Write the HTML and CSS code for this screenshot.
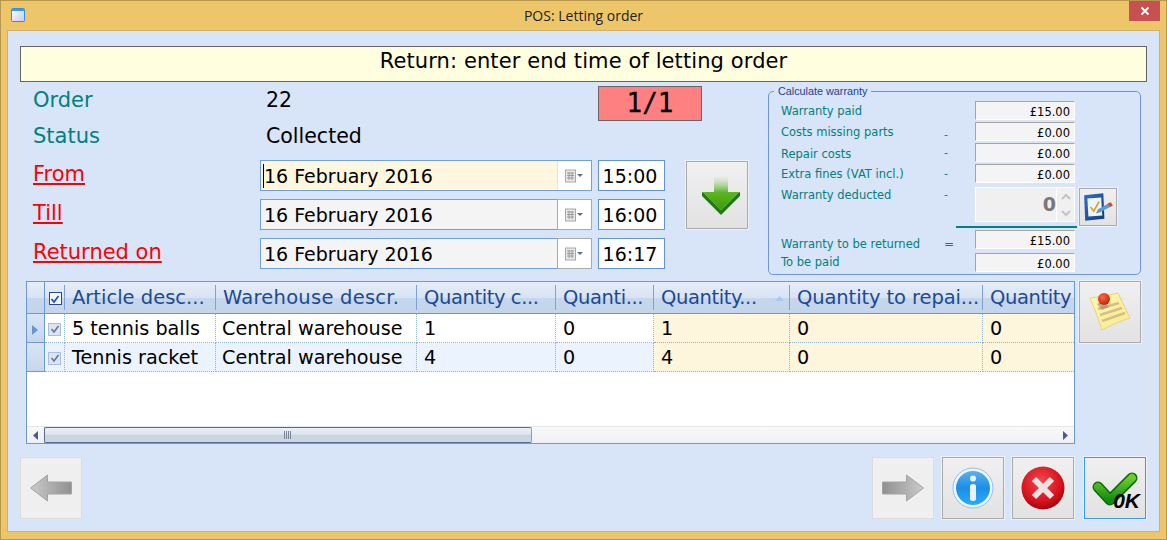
FILE: index.html
```html
<!DOCTYPE html>
<html lang="en">
<head>
<meta charset="utf-8">
<title>POS: Letting order</title>
<link rel="stylesheet" href="styles.css">
</head>
<body>
<div class="window">
  <header class="titlebar">
    <svg class="appicon" width="15" height="15" viewBox="0 0 15 15"><defs><linearGradient id="ai" x1="0" y1="0" x2="1" y2="1"><stop offset="0" stop-color="#fff"/><stop offset="1" stop-color="#c6c8f4"/></linearGradient></defs><rect x=".5" y=".5" width="13" height="13" rx="1" fill="url(#ai)" stroke="#2f8fe8"/><rect x="1" y="1" width="12" height="2" fill="#3a9af0"/></svg>
    <span class="title">POS: Letting order</span>
    <button class="close"><svg width="10" height="10" viewBox="0 0 10 10"><path d="M1.500 1.500l7 7M8.500 1.500l-7 7" stroke="#fff" stroke-width="1.800"/></svg></button>
  </header>
  <main class="content">
    <div class="banner">Return: enter end time of letting order</div>
    <section class="panel">
      <div class="top">
        <div class="form">
          <span class="lbl-teal">Order</span><span class="val">22</span>
          <div class="badge">1/1</div>
          <span class="lbl-teal">Status</span><span class="val">Collected</span>

          <a class="lbl-red">From</a>
          <div class="date"><span class="date-text focus"><i class="caret"></i>16 February 2016</span><span class="cal"><svg width="22" height="14" viewBox="0 0 22 14"><use href="#calicon"/></svg></span></div>
          <div class="time">15:00</div>
          <button class="btn arrow-btn">
            <svg width="38" height="40" viewBox="0 0 38 40"><defs><linearGradient id="st" x1="0" y1="0" x2="0" y2="1"><stop offset="0" stop-color="#a9d98f" stop-opacity=".1"/><stop offset="1" stop-color="#46a80e"/></linearGradient><linearGradient id="hd" x1="0" y1="0" x2="0" y2="1"><stop offset="0" stop-color="#5cb81c"/><stop offset="1" stop-color="#3c9a0c"/></linearGradient></defs><rect x="12" y="0" width="14" height="17" fill="url(#st)"/><path d="M0 15.500L1 15 19 33 37 15 38 15.500V19L19 38 0 19Z" fill="#1f7a12"/><path d="M1 15h11v1h14v-1h11L19 33Z" fill="url(#hd)"/></svg>
          </button>

          <a class="lbl-red">Till</a>
          <div class="date alt"><span class="date-text">16 February 2016</span><span class="cal"><svg width="22" height="14" viewBox="0 0 22 14"><use href="#calicon"/></svg></span></div>
          <div class="time">16:00</div>

          <a class="lbl-red">Returned on</a>
          <div class="date alt"><span class="date-text">16 February 2016</span><span class="cal"><svg width="22" height="14" viewBox="0 0 22 14"><use href="#calicon"/></svg></span></div>
          <div class="time">16:17</div>
        </div>

        <fieldset class="warranty">
          <legend>Calculate warranty</legend>
          <div class="wgrid">
            <span class="wl">Warranty paid</span><span class="op"></span><span class="wf">£15.00</span><span></span>
            <span class="wl">Costs missing parts</span><span class="op low">-</span><span class="wf">£0.00</span><span></span>
            <span class="wl dn2">Repair costs</span><span class="op">-</span><span class="wf">£0.00</span><span></span>
            <span class="wl">Extra fines (VAT incl.)</span><span class="op">-</span><span class="wf">£0.00</span><span></span>
            <span class="wl">Warranty deducted</span><span class="op">-</span>
            <div class="spin"><span class="spin-val">0</span><span class="spin-btns"><svg width="10" height="33" viewBox="0 0 10 33"><path d="M1 11l4-4 4 4M1 23l4 4 4-4" fill="none" stroke="#c4c4c4" stroke-width="2"/></svg></span></div>
            <button class="btn edit-btn"><svg width="32" height="32" viewBox="0 0 30 30"><defs><linearGradient id="tb" x1="0" y1="0" x2="1" y2="1"><stop offset="0" stop-color="#2f6fc8"/><stop offset="1" stop-color="#12397f"/></linearGradient></defs><path d="M2 4l18-2 1 24-18 2Z" fill="url(#tb)"/><path d="M5 7l13-1 1 17-13 1Z" fill="#eef4fb"/><path d="M8 15l3 4 5-9" fill="none" stroke="#e0a020" stroke-width="1.600"/><path d="M13 21l2-4 11-6 2 3-11 6Z" fill="#5a9ad8"/><path d="M24 12l3-1.500 2 3-3 1.500Z" fill="#d04a30"/></svg></button>
            <span class="rule"></span>
            <span class="wl dn4">Warranty to be returned</span><span class="op eq">=</span><span class="wf">£15.00</span><span></span>
            <span class="wl dn2">To be paid</span><span class="op"></span><span class="wf last">£0.00</span><span></span>
          </div>
        </fieldset>
      </div>

      <div class="gridrow">
        <div class="gridbox">
          <div class="viewport">
            <table class="grid">
              <colgroup><col class="c1"><col class="c2"><col class="c3"><col class="c4"><col class="c5"><col class="c6"><col class="c7"><col class="c8"><col class="c9"></colgroup>
              <thead>
                <tr>
                  <th class="ind"></th>
                  <th class="chk"><span class="cb head"><svg width="10" height="10" viewBox="0 0 10 10"><path d="M1.500 5l2.500 3 4.500-6" fill="none" stroke="#1f57b4" stroke-width="1.800"/></svg></span></th>
                  <th>Article desc...</th><th class="wh">Warehouse descr.</th><th class="q">Quantity c...</th><th class="q">Quanti...</th>
                  <th class="q">Quantity...<svg class="sort" width="9" height="5" viewBox="0 0 9 5"><path d="M4.500 0L9 5H0Z" fill="#a8c8f0"/></svg></th>
                  <th class="q2">Quantity to repai...</th><th class="q end">Quantity</th>
                </tr>
              </thead>
              <tbody>
                <tr>
                  <td class="ind"><svg width="6" height="10" viewBox="0 0 6 10"><path d="M0 0l6 5-6 5Z" fill="#6a94d0"/></svg></td>
                  <td class="chk"><span class="cb"><svg width="10" height="10" viewBox="0 0 10 10"><path d="M1.500 5l2.500 3 4.500-6" fill="none" stroke="#5c78a8" stroke-width="1.600"/></svg></span></td>
                  <td>5 tennis balls</td><td class="wc">Central warehouse</td><td class="n">1</td><td>0</td><td class="hi">1</td><td class="hi">0</td><td class="hi">0</td>
                </tr>
                <tr class="odd">
                  <td class="ind"></td>
                  <td class="chk"><span class="cb"><svg width="10" height="10" viewBox="0 0 10 10"><path d="M1.500 5l2.500 3 4.500-6" fill="none" stroke="#5c78a8" stroke-width="1.600"/></svg></span></td>
                  <td>Tennis racket</td><td class="wc">Central warehouse</td><td class="n">4</td><td>0</td><td class="hi">4</td><td class="hi">0</td><td class="hi">0</td>
                </tr>
              </tbody>
            </table>
          </div>
          <div class="hscroll">
            <span class="sb-arrow"><svg width="5" height="9" viewBox="0 0 5 9"><path d="M5 0L0 4.500 5 9Z" fill="#4a5c8c"/></svg></span>
            <div class="thumb"><i class="grip"></i></div>
            <span class="sb-space"></span>
            <span class="sb-arrow right"><svg width="5" height="9" viewBox="0 0 5 9"><path d="M0 0L5 4.500 0 9Z" fill="#4a5c8c"/></svg></span>
          </div>
        </div>
        <button class="btn big">
          <svg width="44" height="40" viewBox="0 0 44 40"><defs><linearGradient id="pp" x1="0" y1="0" x2="1" y2="1"><stop offset="0" stop-color="#fff8b0"/><stop offset="1" stop-color="#f8e890"/></linearGradient><radialGradient id="pin" cx=".4" cy=".35" r=".7"><stop offset="0" stop-color="#ff6a3a"/><stop offset="1" stop-color="#c81c0c"/></radialGradient></defs><path d="M2 6Q16 5 30 1 36 14 42 26 28 30 14 38 9 22 2 6Z" fill="url(#pp)" stroke="#e8d478"/><path d="M10 17l21-6M12 23l22-7M14 29l23-8" stroke="#d4c084" stroke-width="2.500" fill="none"/><path d="M9 12l6-4 6 7-7 3Z" fill="#8a8a70" opacity=".6"/><circle cx="16" cy="7" r="6" fill="url(#pin)"/></svg>
        </button>
      </div>
    </section>

    <footer class="actions">
      <button class="btn big off">
        <svg width="42" height="28" viewBox="0 0 42 28"><use href="#grayarrow" transform="translate(42 0) scale(-1 1)"/></svg>
      </button>
      <span class="spacer"></span>
      <button class="btn big off">
        <svg width="42" height="28" viewBox="0 0 42 28"><use href="#grayarrow"/></svg>
      </button>
      <button class="btn big">
        <svg width="42" height="42" viewBox="0 0 42 42"><defs><linearGradient id="inf" x1="0" y1="0" x2="0" y2="1"><stop offset="0" stop-color="#5ab0ee"/><stop offset=".5" stop-color="#1c8ee8"/><stop offset="1" stop-color="#28acff"/></linearGradient></defs><circle cx="21" cy="21" r="20" fill="#f0f6fe" stroke="#8cc0f0"/><circle cx="21" cy="21" r="17" fill="url(#inf)"/><circle cx="21" cy="11.500" r="3" fill="#e8f2fc"/><rect x="18" y="17" width="6" height="17" rx="2.500" fill="#e8f2fc"/></svg>
      </button>
      <button class="btn big">
        <svg width="44" height="44" viewBox="0 0 44 44"><defs><radialGradient id="rd" cx=".45" cy=".35" r=".7"><stop offset="0" stop-color="#f24a50"/><stop offset=".7" stop-color="#d40f1a"/><stop offset="1" stop-color="#8a0810"/></radialGradient></defs><circle cx="22" cy="22" r="21.500" fill="url(#rd)"/><path d="M13 13l18 18M31 13L13 31" stroke="#ece4e4" stroke-width="6"/></svg>
      </button>
      <button class="btn big ok">
        <svg width="46" height="36" viewBox="0 0 46 36"><defs><linearGradient id="gr" x1="0" y1="0" x2="0" y2="1"><stop offset="0" stop-color="#6ccc30"/><stop offset="1" stop-color="#128a10"/></linearGradient></defs><path d="M6 17l12 13L40 8" fill="none" stroke="#0c6a0c" stroke-width="11" stroke-linecap="round" stroke-linejoin="round"/><path d="M6 17l12 13L40 8" fill="none" stroke="url(#gr)" stroke-width="8" stroke-linecap="round" stroke-linejoin="round"/></svg>
        <span class="ok-text">0K</span>
      </button>
    </footer>
  </main>
</div>
<svg class="defs" width="0" height="0">
  <defs>
    <symbol id="calicon" viewBox="0 0 22 14">
      <rect x="1.500" y="1" width="10" height="12" fill="#e8e8e8" stroke="#a8a8a8"/>
      <path d="M3 4h7M3 6.500h7M3 9h7M5 3v8M8 3v8" stroke="#9a9a9a"/>
      <path d="M13 5h6l-3 3Z" fill="#5a6c94"/>
    </symbol>
    <linearGradient id="gb" x1="0" y1="0" x2="1" y2="0"><stop offset="0" stop-color="#909090"/><stop offset="1" stop-color="#cacaca"/></linearGradient>
    <symbol id="grayarrow" viewBox="0 0 42 28">
      <path d="M.5 8h24V1l17 13-17 13v-7H.5Z" fill="url(#gb)" stroke="#a4a4a4"/>
    </symbol>
  </defs>
</svg>
</body>
</html>
```
FILE: styles.css
```css
* { box-sizing: border-box; }
html, body { margin: 0; height: 100%; }
body { background: #eec66a; font-family: "DejaVu Sans", sans-serif; overflow: hidden; }
.defs { position: absolute; }
.window { width: 1167px; height: 540px; border: 1px solid #b8984f; background: #eec66a; display: flex; flex-direction: column; }

.titlebar { height: 29px; display: flex; align-items: flex-start; position: relative; justify-content: center; }
.appicon { position: absolute; left: 10px; top: 7px; }
.title { font: 14px/30px "Open Sans", sans-serif; color: #222; }
.close { position: absolute; right: 6px; top: 0; width: 31px; height: 20px; background: #c75050; border: 0; padding: 0; display: flex; align-items: center; justify-content: center; }

.content { margin: 0 6px 7px; flex: 1; border: 1px solid #d2b268; background: #d8e4f8; padding: 15px 12px 0 12px; display: flex; flex-direction: column; }
.banner { height: 36px; border: 1px solid #666; background: #ffffe0; color: #000; font-size: 21px; line-height: 29px; text-align: center; letter-spacing: .1px; }

.panel { height: 368px; border: 1px solid #e0e4ee; border-top: 0; padding: 0 5px; display: flex; flex-direction: column; }
.top { height: 192px; display: flex; margin-left: -1px; }
.form { width: 723px; padding-top: 3px; display: grid; grid-template-columns: 229px 332px 67px 9px 62px; grid-template-rows: 28px 31px 31px 31px 31px; gap: 8px 6px; align-content: start; }
.lbl-teal { color: #008080; font-size: 21px; line-height: 30px; padding-left: 8px; grid-column: 1; }
.val { font-size: 20.5px; line-height: 30px; color: #000; padding-left: 6px; grid-column: 2; }
.lbl-red { color: #f00; font-size: 21px; line-height: 28px; padding-left: 8px; text-decoration: underline; grid-column: 1; white-space: nowrap; }
.badge { grid-column: 3 / 6; grid-row: 1 / span 2; align-self: start; justify-self: start; width: 104px; height: 35px; margin-top: 1px; background: #ff8080; border: 1px solid #666; font: 26px/33px "DejaVu Sans Mono", monospace; text-align: center; -webkit-text-stroke: .3px #000; }
.date { grid-column: 2; display: flex; height: 31px; border: 1px solid #6ea0e0; background: #fff; }
.date-text { flex: 1; font-size: 19px; line-height: 30px; padding-left: 3px; background: #f4f4f4; white-space: nowrap; position: relative; }
.date-text.focus { background: #fff6de; }
.caret { position: absolute; left: 2px; top: 3px; width: 1px; height: 24px; background: #000; }
.cal { width: 34px; display: flex; align-items: center; justify-content: center; background: #fff; border-left: 1px solid #e4e4e4; }
.alt .cal { width: 35px; margin: -1px -1px -1px 0; border: 1px solid #aaa; }
.time { grid-column: 3; height: 31px; border: 1px solid #5f94dc; background: #fff; font-size: 19px; line-height: 30px; text-align: center; padding-right: 3px; }

.btn { border: 1px solid #aaa; background: linear-gradient(#f0f0f0, #e2e2e2); display: flex; align-items: center; justify-content: center; position: relative; box-shadow: 0 0 0 1px rgba(255,255,255,.5); padding: 0; }
.arrow-btn { grid-column: 5; grid-row: 3 / span 2; height: 68px; margin-top: 1px; padding: 4px 0 0 8px; }

.warranty { width: 375px; height: 190px; margin: 3px 0 0 20px; padding: 0; border: 1px solid #6e96d4; border-radius: 5px; min-width: 0; }
.warranty legend { margin-left: 5px; padding: 0 4px; font: 10.8px/12px "Liberation Sans", sans-serif; color: #1c3f94; }
.wgrid { margin-top: 4px; padding-left: 12px; display: grid; grid-template-columns: 164px 30px 100px 38px; grid-template-rows: 19px 19px 19px 19px 39px 2px 19px 21px; row-gap: 2px; }
.wl { color: #008080; font-size: 11.5px; line-height: 20px; white-space: nowrap; }
.dn2 { padding-top: 1px; }
.dn4 { padding-top: 4px; }
.op { color: #008080; font-size: 11px; line-height: 20px; margin-left: -1px; }
.op.low { padding-top: 3px; }
.op.eq { line-height: 28px; font-size: 12px; }
.wf { background: #f4f4f4; border: 1px solid #fff; border-top-color: #a4a4a4; border-left-color: #a4a4a4; font-size: 11.5px; line-height: 20px; text-align: right; padding-right: 4px; color: #000; height: 19px; }
.wf.last { align-self: end; }
.spin { display: flex; height: 35px; margin-top: 2px; background: #f0f0f0; border: 1px solid #fff; }
.spin-val { flex: 1; text-align: right; font-size: 19px; font-weight: bold; line-height: 33px; color: #787878; padding-right: 0; }
.spin-btns { width: 18px; display: flex; align-items: center; justify-content: center; border-left: 1px solid #fff; }
.edit-btn { width: 38px; height: 38px; margin: 3px 0 0 4px; }
.rule { grid-column: 2 / 5; height: 2px; width: 121px; margin-left: 11px; background: #008080; }

.gridrow { display: flex; gap: 4px; margin-top: 7px; align-items: flex-start; }
.gridbox { width: 1049px; height: 163px; border: 1px solid #6a98d8; background: #fff; display: flex; flex-direction: column; }
.viewport { flex: 1; overflow: hidden; }
.grid { border-collapse: separate; border-spacing: 0; table-layout: fixed; width: 1047px; font-size: 19.2px; }
.c1 { width: 18px; } .c2 { width: 20px; } .c3 { width: 151px; } .c4 { width: 201px; } .c5 { width: 139px; } .c6 { width: 98px; } .c7 { width: 136px; } .c8 { width: 193px; } .c9 { width: 91px; }
.grid th { height: 32px; padding: 0 0 0 7px; border-bottom: 1px solid #6a98d8; font-weight: normal; font-size: 19.5px; color: #1a4a96; text-align: left; white-space: nowrap; overflow: hidden; position: relative;
  background: linear-gradient(#7aa2dc, #7aa2dc) right 3px / 1px 25px no-repeat, linear-gradient(#e6edf8, #d8e3f4 50%, #c6d6ec 52%, #c4d4ea); }
.grid th.wh { letter-spacing: .25px; }
.grid th.q { letter-spacing: -.4px; }
.grid th.q2 { letter-spacing: -.1px; }
.grid th.end { background: linear-gradient(#e6edf8, #d8e3f4 50%, #c6d6ec 52%, #c4d4ea); }
.grid th.ind { border-right: 1px solid #6a98d8; background: linear-gradient(#e6edf8, #d8e3f4 50%, #c6d6ec 52%, #c4d4ea); padding: 0; }
.grid th.chk { padding: 0; text-align: center; }
.sort { position: absolute; right: 6px; top: 14px; }
.grid td { height: 29px; padding: 0 0 0 7px; border-right: 1px dotted #8ab0dc; border-bottom: 1px dotted #8ab0dc; color: #000; white-space: nowrap; overflow: hidden; line-height: 27px; }
.grid td.wc { padding-left: 6px; }
.grid td:last-child { border-right: 0; }
.odd td { background: #eaf3fe; }
.grid td.hi { background: #fdf5dc; }
.grid td.ind { padding: 0 0 0 5px; border-right: 1px solid #6a98d8; border-bottom: 1px solid #6a98d8; background: linear-gradient(#dae5f5, #c6d6ec); }
.grid td.chk { padding: 0; text-align: center; }
.cb { display: inline-flex; width: 13px; height: 13px; align-items: center; justify-content: center; border: 1px solid #a8c0e0; background: #dfe3ec; vertical-align: middle; }
.cb.head { border-color: #2a4a80; background: #f2f6fc; }

.hscroll { height: 17px; display: flex; align-items: stretch; background: linear-gradient(#f8f9fb, #eef0f4); border-top: 1px solid #e6e6e6; }
.sb-arrow { width: 17px; display: flex; align-items: center; justify-content: center; }
.thumb { width: 488px; border: 1px solid #5a6c96; border-right-color: #8e9cbc; border-radius: 2px; background: linear-gradient(#eceff4, #dfe5ee 45%, #c8d4e2 50%, #cdd7e4); display: flex; align-items: center; justify-content: center; }
.grip { width: 8px; height: 8px; background: repeating-linear-gradient(90deg, #7a8494 0 1px, transparent 1px 2px); }
.sb-space { flex: 1; }

.big { width: 62px; height: 62px; flex: none; }
.off { background: #efefef; border-color: #dcdcdc; box-shadow: none; }
.actions { display: flex; gap: 8px; margin: 7px 1px 0 0; }
.spacer { flex: 1; }
.ok { margin-left: 2px; border-color: #3399ff; }
.ok-text { position: absolute; right: 5px; bottom: 7px; font: italic bold 21px/20px "Liberation Sans", sans-serif; color: #000; }
```
